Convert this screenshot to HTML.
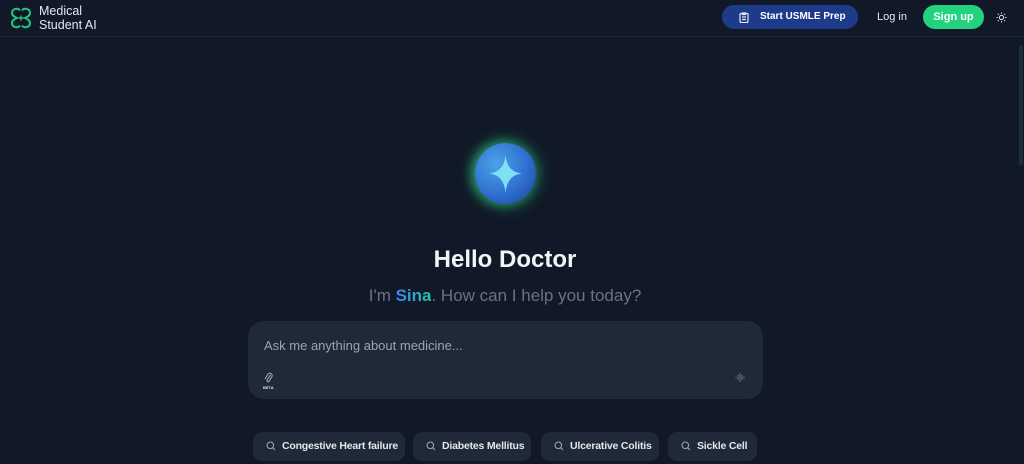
<!DOCTYPE html>
<html><head><meta charset="utf-8"><style>
*{box-sizing:border-box;margin:0;padding:0}
body{width:1024px;height:464px;overflow:hidden;background:#111827;font-family:"Liberation Sans",sans-serif;position:relative;color:#fff}
.hdr{position:absolute;left:0;top:0;width:1024px;height:37px;border-bottom:1px solid #1c2433}
.logo{position:absolute;left:9px;top:6px}
.brand{position:absolute;left:39px;top:4px;font-size:12.5px;line-height:14px;color:#e5e7eb}
.prep{position:absolute;left:722px;top:5px;width:136px;height:24px;border-radius:12px;background:#1e3a8a;font-size:10px;font-weight:bold;line-height:24px;padding-left:38px;white-space:nowrap}
.login{position:absolute;left:877px;top:11px;font-size:11px;color:#e5e7eb}
.sign{position:absolute;left:923px;top:5px;width:61px;height:24px;border-radius:12px;background:#22d27f;font-size:11px;font-weight:bold;line-height:24px;text-align:center}
.scroll{position:absolute;left:1019px;top:45px;width:4px;height:120px;background:#163238;border-radius:2px}
.orb{position:absolute;left:475px;top:143px;width:61px;height:61px;border-radius:50%;background:radial-gradient(circle at 35% 35%,#4aa3e8,#2f6fd0 55%,#1e3f8c);box-shadow:0 0 14px 4px rgba(40,200,130,.45),-3px 0 10px rgba(60,220,140,.5)}
h1{position:absolute;left:0;width:1010px;top:246px;text-align:center;font-size:24px;font-weight:bold;color:#f3f4f6}
.sub{position:absolute;left:0;width:1010px;top:286px;text-align:center;font-size:17px;color:#6b7280}
.sub b{background:linear-gradient(90deg,#3b82f6,#22c5a0);-webkit-background-clip:text;color:transparent}
.box{position:absolute;left:248px;top:321px;width:515px;height:78px;border-radius:16px;background:#1f2937}
.ph{position:absolute;left:16px;top:17px;font-size:13px;color:#9ca3af}
.beta{position:absolute;left:15px;top:64px;font-size:4px;font-weight:bold;color:#e5e7eb}
.chip{position:absolute;top:432px;height:29px;border-radius:9px;background:#1f2937;font-size:10.5px;font-weight:bold;letter-spacing:-0.2px;color:#e5e7eb;line-height:29px;padding-left:29px;white-space:nowrap}
.chip svg{position:absolute;left:13px;top:9px}
</style></head><body>
<div class="hdr">
<svg class="logo" width="24" height="24" viewBox="0 0 24 24" fill="none" stroke="#22c57f" stroke-width="2"><path d="M11 4.5C9 1.5 3 2.5 3 7c0 3 3 4 5 5-2 1-5 2-5 5 0 4.5 6 5.5 8 2.5"/><path d="M13 4.5c2-3 8-2 8 2.5 0 3-3 4-5 5 2 1 5 2 5 5 0 4.5-6 5.5-8 2.5"/><path d="M9.5 12h5M12 9.5v5" stroke-width="1.4"/></svg>
<div class="brand">Medical<br>Student AI</div>
<div class="prep"><svg style="position:absolute;left:17px;top:7px" width="10" height="11" viewBox="0 0 10 11" fill="none" stroke="#e5e7eb" stroke-width="1.2"><rect x="1" y="1.5" width="8" height="9" rx="1"/><path d="M3.5 1h3v1.5h-3zM3 5h4M3 7.5h4"/></svg>Start USMLE Prep</div>
<div class="login">Log in</div>
<div class="sign">Sign up</div>
<svg style="position:absolute;left:996px;top:12px" width="11" height="11" viewBox="0 0 12 12" fill="none" stroke="#e5e7eb" stroke-width="1.1"><circle cx="6" cy="6" r="2.3"/><path d="M6 0.5v1.5M6 10v1.5M0.5 6h1.5M10 6h1.5M2 2l1 1M9 9l1 1M2 10l1-1M9 3l1-1"/></svg>
</div>
<div class="scroll"></div>
<div class="orb"><svg width="61" height="61" viewBox="0 0 61 61"><path d="M30.5 12 Q32 29 47 30.5 Q32 32 30.5 50 Q29 32 14 30.5 Q29 29 30.5 12Z" fill="#7ee0f5"/></svg></div>
<h1>Hello Doctor</h1>
<div class="sub">I'm <b>Sina</b>. How can I help you today?</div>
<div class="box"><div class="ph">Ask me anything about medicine...</div>
<svg style="position:absolute;left:16px;top:51px" width="9" height="12" viewBox="0 0 9 12" fill="none" stroke="#9ca3af" stroke-width="1.1"><path d="M6.5 3 L3 8a1.3 1.3 0 0 0 2 1.5L8 4.5A2.4 2.4 0 0 0 4 2L1 7"/></svg>
<div class="beta">BETA</div>
<svg style="position:absolute;left:487px;top:52px" width="11" height="9" viewBox="0 0 11 9" stroke="#6b7280" stroke-width="1"><path d="M1 4v1M3 2v5M5 0v9M7 2v5M9 3.5v2"/></svg>
</div>
<div class="chip" style="left:253px;width:152px"><svg width="10" height="10" viewBox="0 0 10 10" fill="none" stroke="#9ca3af" stroke-width="1.1"><circle cx="4.3" cy="4.3" r="3.3"/><path d="M6.8 6.8L9 9"/></svg>Congestive Heart failure</div>
<div class="chip" style="left:413px;width:118px"><svg width="10" height="10" viewBox="0 0 10 10" fill="none" stroke="#9ca3af" stroke-width="1.1"><circle cx="4.3" cy="4.3" r="3.3"/><path d="M6.8 6.8L9 9"/></svg>Diabetes Mellitus</div>
<div class="chip" style="left:541px;width:118px"><svg width="10" height="10" viewBox="0 0 10 10" fill="none" stroke="#9ca3af" stroke-width="1.1"><circle cx="4.3" cy="4.3" r="3.3"/><path d="M6.8 6.8L9 9"/></svg>Ulcerative Colitis</div>
<div class="chip" style="left:668px;width:89px"><svg width="10" height="10" viewBox="0 0 10 10" fill="none" stroke="#9ca3af" stroke-width="1.1"><circle cx="4.3" cy="4.3" r="3.3"/><path d="M6.8 6.8L9 9"/></svg>Sickle Cell</div>
</body></html>
